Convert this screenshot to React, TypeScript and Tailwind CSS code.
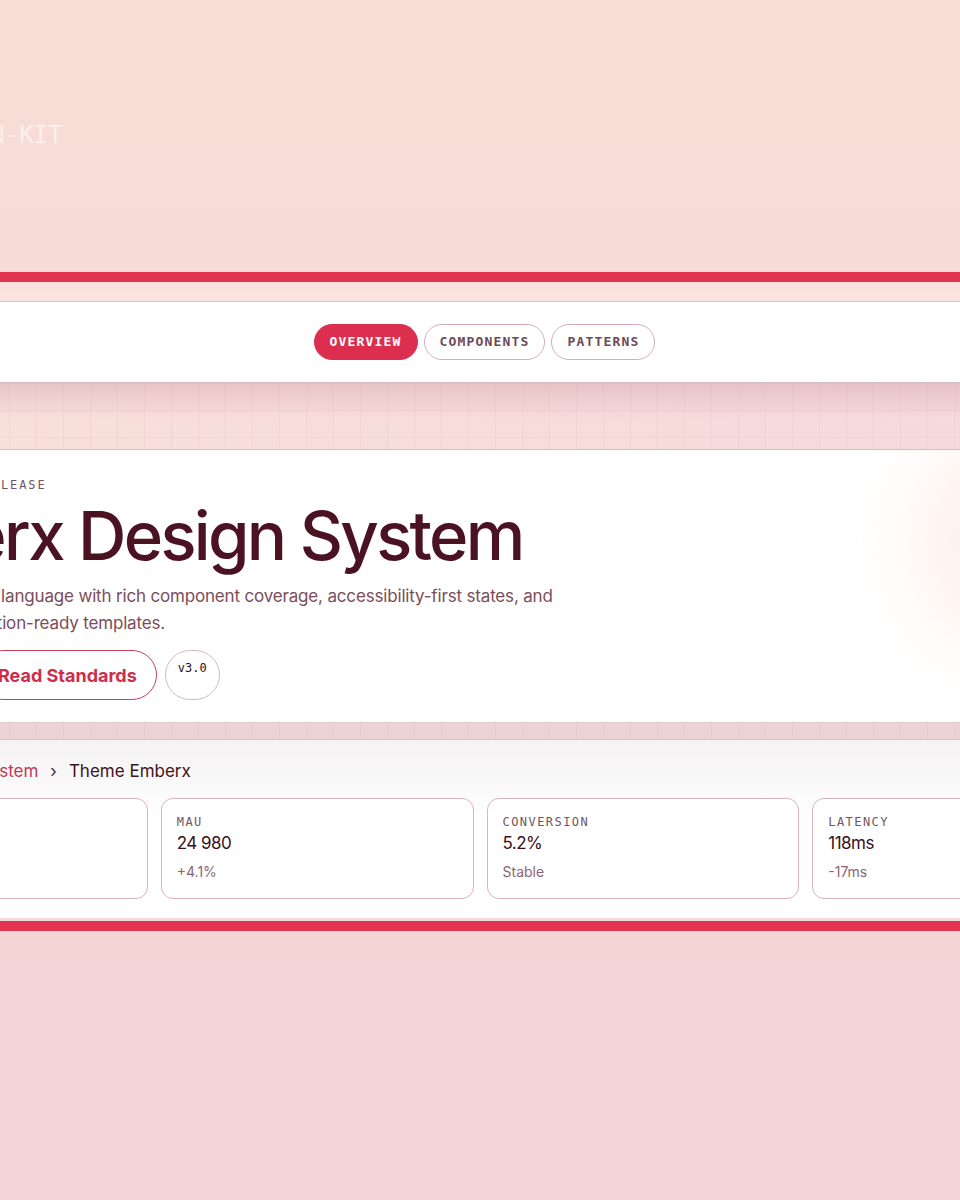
import React from 'react';

const sans = "font-['Inter','Liberation_Sans',sans-serif]";
const mono = "font-['DejaVu_Sans_Mono','Liberation_Mono',monospace]";

const metrics = [
  { label: 'Active Teams', value: '1 284', delta: '+12 this week' },
  { label: 'MAU', value: '24 980', delta: '+4.1%' },
  { label: 'Conversion', value: '5.2%', delta: 'Stable' },
  { label: 'Latency', value: '118ms', delta: '-17ms' },
];

const tabs = ['Overview', 'Components', 'Patterns'];

// faint blueprint grid used on the spacer bands
const gridBand =
  "[background-image:linear-gradient(to_right,rgba(190,140,150,0.10)_1px,transparent_1px),linear-gradient(to_bottom,rgba(190,140,150,0.10)_1px,transparent_1px)] [background-size:27px_27px]";

export default function App() {
  return (
    <div className={`${sans} w-full h-[1200px] overflow-hidden bg-[linear-gradient(to_bottom,#f8ddd6,#f4d4d7)]`}>
      <div className="w-[1320px] -ml-[180px] flex flex-col">
        {/* Kit title */}
        <header className="h-[272px] pt-[117px] pl-[98px]">
          <p className={`${mono} text-[24px] leading-[36px] text-[#fcefec]`}>DESIGN-KIT</p>
        </header>

        <div className="h-[10px] bg-[#e0344f]" />
        <div className="h-[20px] bg-[linear-gradient(to_bottom,#f8e0dc,#fae6e2)] border-b border-[#dcc3c7]" />

        {/* Tabs */}
        <nav className="h-[80px] bg-white flex items-center justify-center pl-[9px] gap-[6px]">
          {tabs.map((t, i) => (
            <button
              key={t}
              className={`${mono} h-[36px] px-[15px] rounded-full text-[13px] font-bold tracking-[0.09em] uppercase ${
                i === 0
                  ? 'bg-[#dc2f4f] text-white border border-[#dc2f4f]'
                  : 'bg-white text-[#6e4a57] border border-[#d8acb5]'
              }`}
            >
              {t}
            </button>
          ))}
        </nav>

        <div className="h-[68px] border-y border-[#d9bcc2] bg-[linear-gradient(to_right,#f9e1da,#f6d8dc)] relative">
          <div className="absolute inset-0 bg-[linear-gradient(to_bottom,rgba(200,150,158,0.35),rgba(255,255,255,0)_55%)]" />
          <div className={`absolute inset-0 ${gridBand}`} />
        </div>

        {/* Hero */}
        <section className="relative h-[272px] bg-white overflow-hidden pl-[62px] pt-[27px]">
          <div className="absolute right-[50px] -top-[15px] w-[170px] h-[210px] rounded-full bg-[#fde6dc] blur-2xl opacity-60" />
          <div className="relative">
            <p className={`${mono} text-[12px] leading-[16px] tracking-[0.16em] text-[#6f5560] uppercase`}>
              Featured · Release
            </p>
            <h1 className="mt-[8px] -ml-[48px] text-[67px] leading-[70px] tracking-[-0.04em] font-medium text-[#4a1222]">
              Emberx Design System
            </h1>
            <p className="mt-[12px] ml-[4px] text-[17px] leading-[27px] tracking-[-0.01em] text-[#7b4d5a]">
              A warm visual language with rich component coverage, accessibility-first states, and
              <br />
              robust production-ready templates.
            </p>
            <div className="mt-[13px] flex gap-[8px]">
              <button className="h-[50px] w-[88px] rounded-full bg-[#dc2f4f] text-white text-[18px] font-bold">
                Start
              </button>
              <button className="h-[50px] px-[19px] rounded-full border-[1.5px] border-[#c9405c] text-[#cf2d4c] text-[18px] font-bold">
                Read Standards
              </button>
              <span className={`${mono} h-[50px] w-[55px] rounded-full border border-[#d6b8be] flex justify-center pt-[8px] text-[12px] text-[#2a1015]`}>
                v3.0
              </span>
            </div>
          </div>
        </section>

        <div className={`h-[18px] border-b border-[#dcc0c5] bg-[#edd3d6] ${gridBand}`} />

        {/* Breadcrumb + metrics */}
        <section className="h-[178px] bg-[linear-gradient(to_bottom,#f4f2f2,#ffffff_45%)] px-[15px] pt-[19px]">
          <div className="flex items-center gap-[12px] text-[17px] leading-[24px] pl-[5px]">
            <span className="text-[#c5375a]">Home</span>
            <span className="text-[#4b2530]">›</span>
            <span className="text-[#c5375a]">Design System</span>
            <span className="text-[#4b2530]">›</span>
            <span className="text-[#3d1420]">Theme Emberx</span>
          </div>
          <div className="mt-[15px] grid grid-cols-4 gap-[13px]">
            {metrics.map((m) => (
              <div key={m.label} className="h-[101px] rounded-[12px] border border-[#d7b5bc] bg-white px-[15px] pt-[15px]">
                <p className={`${mono} text-[12px] leading-[16px] tracking-[0.12em] uppercase text-[#6f5560]`}>
                  {m.label}
                </p>
                <p className="mt-[1px] text-[17px] leading-[24px] tracking-[-0.03em] text-[#3a1020]">{m.value}</p>
                <p className="mt-[7px] text-[14px] leading-[20px] text-[#8a6570]">{m.delta}</p>
              </div>
            ))}
          </div>
        </section>

        <div className="h-[3px] bg-[#f3dadd]" />
        <div className="h-[10px] bg-[#e0344f]" />
      </div>
    </div>
  );
}
